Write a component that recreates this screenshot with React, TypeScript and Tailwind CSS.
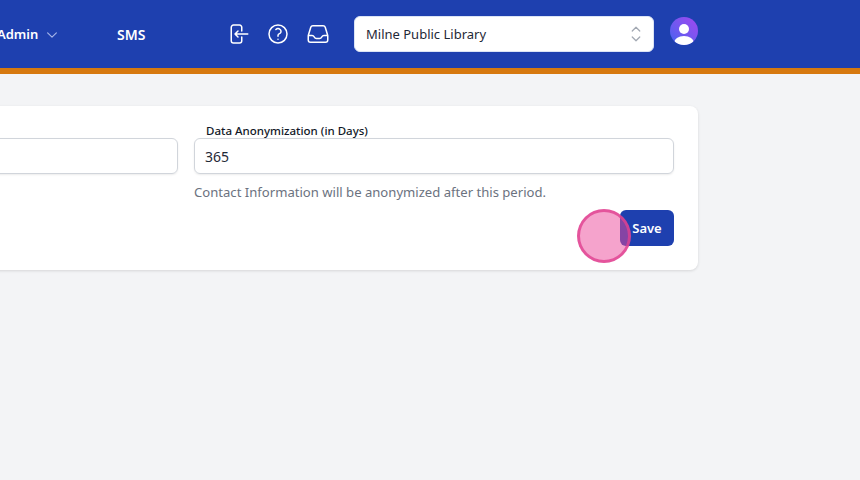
export default function App() {
  const font = "font-['Noto_Sans','Open_Sans',sans-serif]";
  return (
    <div className={`w-[860px] h-[480px] overflow-hidden bg-[#f3f4f6] ${font} relative`}>
      <header className="h-[74px] bg-[#1e40af] border-b-[6px] border-[#d6790f] flex items-center text-white">
        <div className="ml-[-3px] flex items-center w-[120px] pt-[1px]">
          <span className="text-[13px] font-semibold">Admin</span>
          <svg className="w-[14px] h-[14px] ml-[7px] text-[#a5b4e8]" fill="none" viewBox="0 0 24 24" stroke="currentColor" strokeWidth="2"><path strokeLinecap="round" strokeLinejoin="round" d="M19.5 8.25l-7.5 7.5-7.5-7.5" /></svg>
        </div>
        <span className="text-[14px] font-semibold w-[109px] pt-[1px]">SMS</span>
        <div className="flex gap-4 text-white">
          <svg className="w-6 h-6" fill="none" viewBox="0 0 24 24" stroke="currentColor" strokeWidth="1.5"><path strokeLinecap="round" strokeLinejoin="round" d="M15.75 9V5.25A2.25 2.25 0 0013.5 3h-6a2.25 2.25 0 00-2.25 2.25v13.5A2.25 2.25 0 007.5 21h6a2.25 2.25 0 002.25-2.25V15M12 9l-3 3m0 0l3 3m-3-3h12.75" /></svg>
          <svg className="w-6 h-6" fill="none" viewBox="0 0 24 24" stroke="currentColor" strokeWidth="1.5"><path strokeLinecap="round" strokeLinejoin="round" d="M9.879 7.519c1.171-1.025 3.071-1.025 4.242 0 1.172 1.025 1.172 2.687 0 3.712-.203.179-.43.326-.67.442-.745.361-1.45.999-1.45 1.827v.75M21 12a9 9 0 11-18 0 9 9 0 0118 0zm-9 5.25h.008v.008H12v-.008z" /></svg>
          <svg className="w-6 h-6" fill="none" viewBox="0 0 24 24" stroke="currentColor" strokeWidth="1.5"><path strokeLinecap="round" strokeLinejoin="round" d="M2.25 13.5h3.86a2.25 2.25 0 012.012 1.244l.256.512a2.25 2.25 0 002.013 1.244h3.218a2.25 2.25 0 002.013-1.244l.256-.512a2.25 2.25 0 012.013-1.244h3.859m-19.5.338V18a2.25 2.25 0 002.25 2.25h15A2.25 2.25 0 0021.75 18v-4.162c0-.224-.034-.447-.1-.661L19.24 5.338a2.25 2.25 0 00-2.15-1.588H6.911a2.25 2.25 0 00-2.15 1.588L2.35 13.177a2.25 2.25 0 00-.1.661z" /></svg>
        </div>
        <div className="ml-6 w-[300px] h-9 bg-white rounded-md border border-[#dbe4f5] flex items-center justify-between pl-[11px] pr-[5px] text-[#1f2937]">
          <span className="text-[13px] pt-[1px]">Milne Public Library</span>
          <svg className="w-6 h-6 text-[#a3a9b3]" fill="none" viewBox="0 0 24 24" stroke="currentColor" strokeWidth="1.25"><path strokeLinecap="round" strokeLinejoin="round" d="M8.25 15L12 18.75 15.75 15m-7.5-6L12 5.25 15.75 9" /></svg>
        </div>
        <div className="ml-4 w-7 h-7 rounded-full overflow-hidden bg-gradient-to-tr from-[#3b62f0] to-[#a044f0] mb-[6px]">
          <svg viewBox="0 0 28 28" className="w-7 h-7" fill="#fff"><circle cx="14" cy="12" r="5" /><ellipse cx="14" cy="26" rx="10" ry="7" /></svg>
        </div>
      </header>
      <main className="pt-8">
        <section className="ml-[-326px] w-[1024px] h-[164px] bg-white rounded-lg shadow-[0_1px_3px_rgba(0,0,0,0.12)] p-6 pt-[17px]">
          <div className="grid grid-cols-2 gap-4">
            <div>
              <div className="h-[15px]" />
              <div className="h-9 rounded-md border border-[#d1d5db] shadow-[0_1px_2px_rgba(0,0,0,0.08)]" />
            </div>
            <div>
              <label className="block h-[15px] pl-3 text-[11.5px] leading-[15px] font-medium text-[#111827]">Data Anonymization (in Days)</label>
              <div className="h-9 rounded-md border border-[#d1d5db] shadow-[0_1px_2px_rgba(0,0,0,0.08)] flex items-center pl-[10px] text-[14px] text-[#1f2937]">365</div>
              <p className="mt-2 text-[13.1px] leading-5 text-[#6b7280]">Contact Information will be anonymized after this period.</p>
            </div>
          </div>
          <div className="flex justify-end mt-[8px]">
            <button className="w-[54px] h-9 pt-[1px] rounded-md bg-[#1e40af] text-white text-[13px] font-semibold">Save</button>
          </div>
        </section>
      </main>
      <div className="absolute left-[577px] top-[209px] w-[54px] h-[54px] rounded-full bg-[rgba(236,72,153,0.5)] border-[3px] border-[rgba(225,65,145,0.8)]" />
    </div>
  );
}
